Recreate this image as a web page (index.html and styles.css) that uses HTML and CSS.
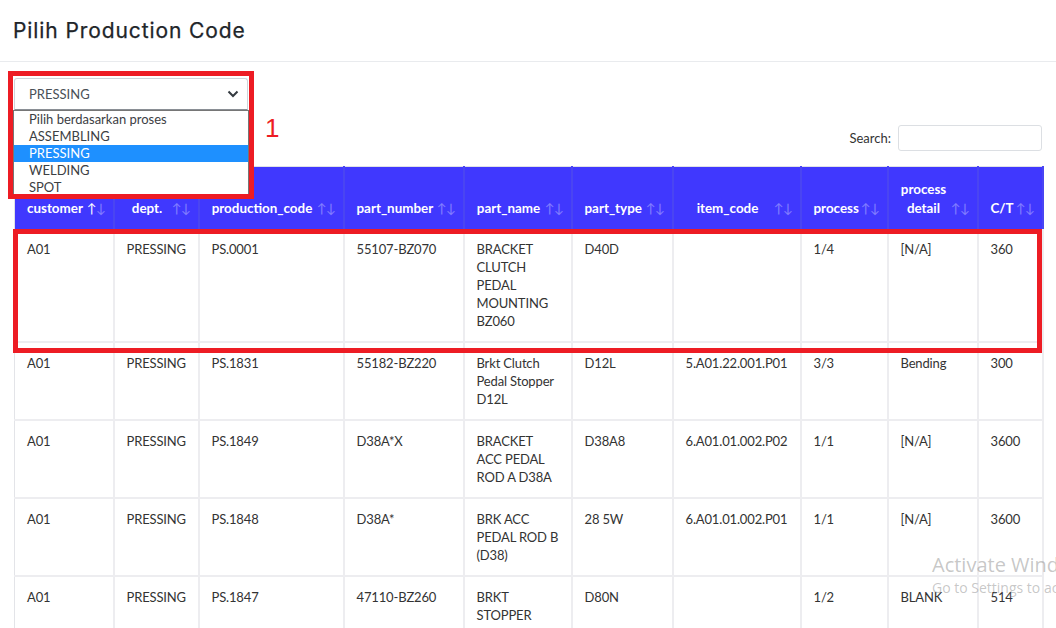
FILE: index.html
```html
<!DOCTYPE html>
<html lang="id">
<head>
<meta charset="utf-8">
<title>Pilih Production Code</title>
<link rel="stylesheet" href="styles.css">
</head>
<body>
<div class="page">
  <header class="topbar">
    <h1 class="title">Pilih Production Code</h1>
  </header>
  <main class="content">
    <div class="select-row">
      <div class="select-wrap">
        <div class="select">
          <span>PRESSING</span>
          <svg class="chev" width="12" height="8" viewBox="0 0 12 8"><path d="M1.5 1.5 L6 6 L10.5 1.5" fill="none" stroke="#343a40" stroke-width="2"/></svg>
        </div>
        <ul class="options">
          <li>Pilih berdasarkan proses</li>
          <li>ASSEMBLING</li>
          <li class="active">PRESSING</li>
          <li>WELDING</li>
          <li>SPOT</li>
        </ul>
      </div>
    </div>
    <div class="search-row">
      <label class="search-label">Search:</label>
      <input class="search-input" type="text">
    </div>
    <table class="grid">
      <colgroup>
        <col class="c1"><col class="c2"><col class="c3"><col class="c4"><col class="c5">
        <col class="c6"><col class="c7"><col class="c8"><col class="c9"><col class="c10">
      </colgroup>
      <thead>
        <tr>
          <th>customer<span class="sort asc"><i>↑</i><i>↓</i></span></th>
          <th>dept.<span class="sort"><i>↑</i><i>↓</i></span></th>
          <th>production_code<span class="sort"><i>↑</i><i>↓</i></span></th>
          <th>part_number<span class="sort"><i>↑</i><i>↓</i></span></th>
          <th>part_name<span class="sort"><i>↑</i><i>↓</i></span></th>
          <th>part_type<span class="sort"><i>↑</i><i>↓</i></span></th>
          <th>item_code<span class="sort"><i>↑</i><i>↓</i></span></th>
          <th>process<span class="sort"><i>↑</i><i>↓</i></span></th>
          <th>process detail<span class="sort"><i>↑</i><i>↓</i></span></th>
          <th>C/T<span class="sort"><i>↑</i><i>↓</i></span></th>
        </tr>
      </thead>
      <tbody>
        <tr>
          <td>A01</td><td>PRESSING</td><td>PS.0001</td><td>55107-BZ070</td>
          <td>BRACKET CLUTCH PEDAL MOUNTING BZ060</td><td>D40D</td><td></td><td>1/4</td><td>[N/A]</td><td>360</td>
        </tr>
        <tr>
          <td>A01</td><td>PRESSING</td><td>PS.1831</td><td>55182-BZ220</td>
          <td>Brkt Clutch Pedal Stopper D12L</td><td>D12L</td><td>5.A01.22.001.P01</td><td>3/3</td><td>Bending</td><td>300</td>
        </tr>
        <tr>
          <td>A01</td><td>PRESSING</td><td>PS.1849</td><td>D38A*X</td>
          <td>BRACKET ACC PEDAL ROD A D38A</td><td>D38A8</td><td>6.A01.01.002.P02</td><td>1/1</td><td>[N/A]</td><td>3600</td>
        </tr>
        <tr>
          <td>A01</td><td>PRESSING</td><td>PS.1848</td><td>D38A*</td>
          <td>BRK ACC PEDAL ROD B (D38)</td><td>28 5W</td><td>6.A01.01.002.P01</td><td>1/1</td><td>[N/A]</td><td>3600</td>
        </tr>
        <tr>
          <td>A01</td><td>PRESSING</td><td>PS.1847</td><td>47110-BZ260</td>
          <td>BRKT STOPPER BRAKE PEDAL</td><td>D80N</td><td></td><td>1/2</td><td>BLANK</td><td>514</td>
        </tr>
      </tbody>
    </table>
  </main>

  <div class="mark mark-select"></div>
  <div class="mark-num">1</div>
  <div class="mark mark-row"></div>

  <div class="watermark">
    <div class="wm-1">Activate Windows</div>
    <div class="wm-2">Go to Settings to activate Windows.</div>
  </div>
</div>
</body>
</html>
```
FILE: styles.css
```css
html, body {
  margin: 0;
  padding: 0;
  background: #fff;
}
body {
  font-family: Lato, "Open Sans", sans-serif;
  color: #333;
}
.page {
  position: relative;
  width: 1056px;
  height: 628px;
  overflow: hidden;
}
.topbar {
  height: 61px;
  border-bottom: 1px solid #e9ebee;
  display: flex;
  align-items: center;
  padding: 0 13px;
}
.title {
  margin: 0;
  font-family: Inter, "Open Sans", sans-serif;
  font-weight: 400;
  font-size: 21px;
  letter-spacing: 0.9px;
  color: #212529;
  -webkit-text-stroke: 0.25px #212529;
}
.content {
  padding: 16px 14px 0 14px;
}
.select-row {
  height: 32px;
}
.select-wrap {
  position: relative;
  width: 234px;
}
.select {
  box-sizing: border-box;
  height: 32px;
  border: 1px solid #ced4da;
  border-bottom-color: #8a8f95;
  border-radius: 3px 3px 0 0;
  display: flex;
  align-items: center;
  justify-content: space-between;
  padding: 0 8px 0 14px;
  font-size: 13px;
  color: #495057;
}
.chev {
  display: block;
}
.options {
  position: absolute;
  left: -1px;
  top: 32px;
  width: 236px;
  box-sizing: border-box;
  margin: 0;
  padding: 0;
  list-style: none;
  background: #fff;
  border: 1px solid #767676;
  z-index: 3;
}
.options li {
  height: 17px;
  line-height: 17px;
  padding-left: 15px;
  font-size: 13px;
  color: #3c4043;
}
.options li.active {
  background: #1e90ff;
  color: #fff;
}
.search-row {
  margin-top: 15px;
  display: flex;
  justify-content: flex-end;
  align-items: center;
  gap: 7px;
}
.search-label {
  font-size: 13px;
  color: #333;
}
.search-input {
  box-sizing: border-box;
  width: 144px;
  height: 26px;
  border: 1px solid #dcdfe3;
  border-radius: 3px;
  margin: 0;
}
.grid {
  margin-top: 15px;
  table-layout: fixed;
  width: 1028px;
  border-collapse: collapse;
  border-top: 1px solid #dfe1e6;
}
.c1 { width: 99px; }
.c2 { width: 85px; }
.c3 { width: 145px; }
.c4 { width: 120px; }
.c5 { width: 108px; }
.c6 { width: 101px; }
.c7 { width: 128px; }
.c8 { width: 87px; }
.c9 { width: 90px; }
.c10 { width: 65px; }
.grid th {
  position: relative;
  background: #4038fe;
  color: #fff;
  font-weight: 700;
  font-size: 13.4px;
  line-height: 19px;
  text-align: center;
  vertical-align: bottom;
  padding: 13px 30px 11px 12px;
  border-left: 2px solid #4a45f2;
  border-right: 2px solid #4a45f2;
}
.grid th:first-child { border-left: 1px solid #dfe1e6; }
.sort {
  position: absolute;
  right: 7px;
  bottom: 11px;
  line-height: 19px;
  font-size: 13px;
  font-weight: 400;
  letter-spacing: -0.5px;
}
.sort i {
  font-style: normal;
  opacity: 0.35;
}
.sort.asc i:first-child { opacity: 1; }
.grid td {
  font-size: 13px;
  letter-spacing: -0.15px;
  line-height: 18px;
  color: #333;
  vertical-align: top;
  padding: 11px 10px 11px 12px;
  border: 2px solid #ededf0;
  border-top: 0;
}
.grid td:first-child { border-left: 1px solid #e3e4e8; }

/* annotations overlay */
.mark {
  position: absolute;
  border: 5px solid #ed1c24;
  box-sizing: border-box;
  z-index: 5;
  pointer-events: none;
}
.mark-select {
  left: 8px;
  top: 71px;
  width: 246px;
  height: 128px;
}
.mark-row {
  left: 13px;
  top: 229px;
  width: 1029px;
  height: 124px;
}
.mark-num {
  position: absolute;
  left: 265px;
  top: 113px;
  font-family: "Liberation Sans", Arial, sans-serif;
  font-size: 26px;
  color: #ed1c24;
  z-index: 5;
}
.watermark {
  position: absolute;
  left: 932px;
  top: 551px;
  white-space: nowrap;
  font-family: "Open Sans", sans-serif;
  color: rgba(120, 120, 120, 0.42);
  z-index: 6;
}
.wm-1 {
  font-size: 20px;
  line-height: 27px;
}
.wm-2 {
  font-size: 14px;
  line-height: 20px;
}
```
